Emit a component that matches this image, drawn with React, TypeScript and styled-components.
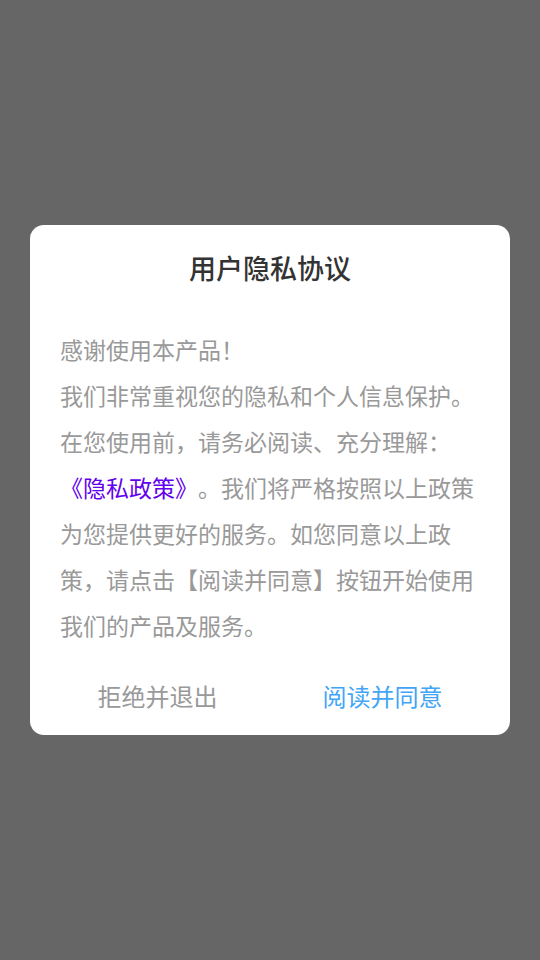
import styled, { createGlobalStyle } from 'styled-components';

const GlobalStyle = createGlobalStyle`
	html, body {
		margin: 0;
		padding: 0;
		background-color: #666666;
	}
	body {
		font-family: "Noto Sans CJK SC", "Noto Sans", sans-serif;
	}
`;

export default function App() {
	return (
		<>
			<GlobalStyle />
			<SOverlay>
				<SDialog>
					<STitle>用户隐私协议</STitle>
					<SBody>
						感谢使用本产品！
						<br />
						我们非常重视您的隐私和个人信息保护。
						<br />
						在您使用前，请务必阅读、充分理解：
						<br />
						<SLink>《隐私政策》</SLink>。我们将严格按照以上政策为您提供更好的服务。如您同意以上政策，请点击【阅读并同意】按钮开始使用我们的产品及服务。
					</SBody>
					<SButtonRow>
						<SButton type='button' $primary={false}>
							拒绝并退出
						</SButton>
						<SButton type='button' $primary>
							阅读并同意
						</SButton>
					</SButtonRow>
				</SDialog>
			</SOverlay>
		</>
	);
}

const SOverlay = styled.div`
	display: flex;
	align-items: center;
	justify-content: center;
	width: 100vw;
	height: 100vh;
	background-color: #666666;
`;

const SDialog = styled.div`
	display: flex;
	flex-direction: column;
	width: 480px;
	box-sizing: border-box;
	padding-top: 24px;
	background-color: #ffffff;
	border-radius: 14px;
`;

const STitle = styled.div`
	height: 38px;
	line-height: 38px;
	text-align: center;
	font-size: 27px;
	font-weight: 500;
	color: #333333;
`;

const SBody = styled.div`
	margin-top: 39px;
	padding: 0 30px;
	font-size: 23px;
	line-height: 46px;
	color: #999999;
	line-break: strict;
	text-spacing-trim: space-all;
`;

const SLink = styled.span`
	color: #6200ee;
`;

const SButtonRow = styled.div`
	display: grid;
	grid-template-columns: 1fr 1fr;
	margin-top: 7px;
	padding: 0 15px;
	height: 80px;
`;

const SButton = styled.button<{ $primary: boolean }>`
	border: none;
	background: transparent;
	padding: 0;
	font-family: "Noto Sans CJK SC", "Noto Sans", sans-serif;
	font-size: 24px;
	color: ${(p) => (p.$primary ? '#42a5f5' : '#999999')};
	cursor: pointer;
`;
